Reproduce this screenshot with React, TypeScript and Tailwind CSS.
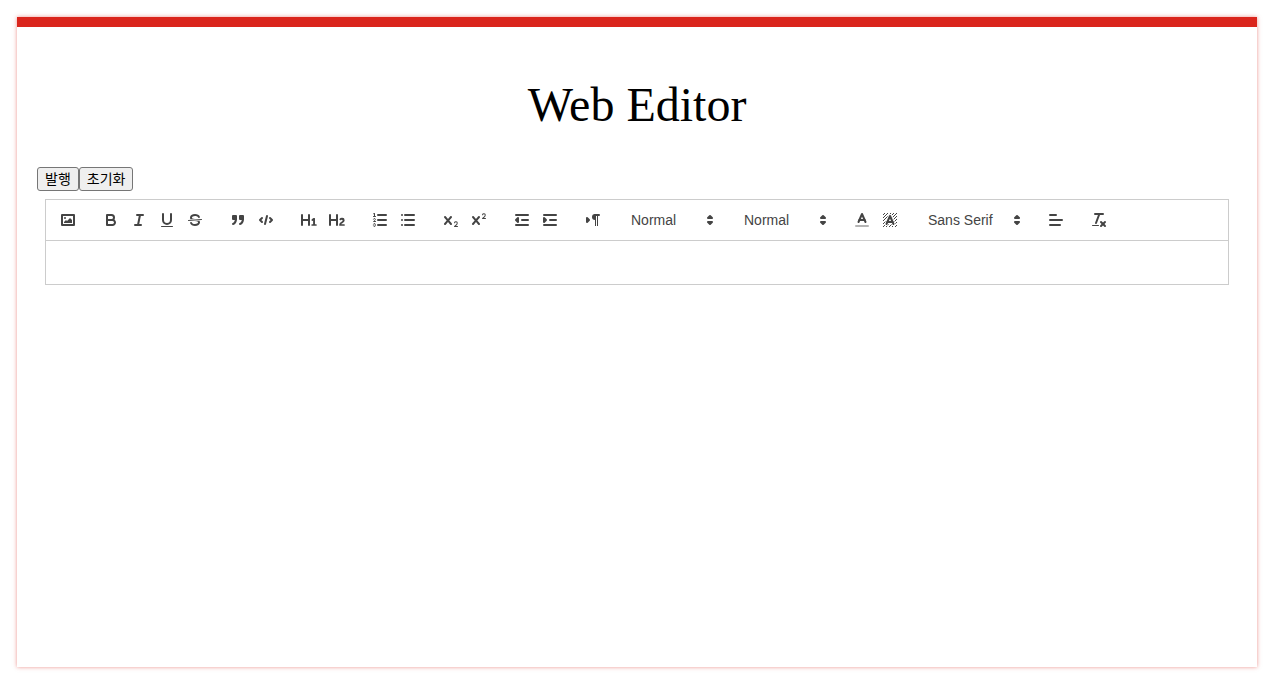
import type { ReactNode } from "react";

const X_GLYPH =
  "M9.65,5.241a1,1,0,0,0-1.409.108L6,7.964,3.759,5.349A1,1,0,0,0,2.192,6.59178Q2.21541,6.6213,2.241,6.649L4.684,9.5,2.241,12.35A1,1,0,0,0,3.71,13.70722q0.02557-.02768.049-0.05722L6,11.036,8.241,13.65a1,1,0,1,0,1.567-1.24277Q9.78459,12.3777,9.759,12.35L7.316,9.5,9.759,6.651A1,1,0,0,0,9.65,5.241Z";

const HATCH: [number, number][] = [
  [4, 4], [2, 6], [3, 5], [4, 7], [2, 12], [2, 9], [2, 15], [3, 8], [12, 2], [11, 3],
  [2, 3], [6, 2], [3, 2], [5, 3], [9, 2], [15, 14], [13, 7], [15, 5], [14, 6], [15, 8],
  [14, 9], [14, 3], [15, 2], [12, 5], [13, 4], [9, 14], [8, 15], [5, 15], [11, 15], [14, 15], [15, 11],
];

const solid = { fill: "#444", stroke: "none" };

function Icon({ children }: { children: ReactNode }) {
  return (
    <svg
      viewBox="0 0 18 18"
      className="size-[18px] shrink-0"
      fill="none"
      stroke="#444"
      strokeWidth="2"
      strokeLinecap="round"
      strokeLinejoin="round"
      aria-hidden="true"
    >
      {children}
    </svg>
  );
}

function Tool({ label, children }: { label: string; children: ReactNode }) {
  return (
    <button type="button" aria-label={label} className="flex h-6 w-7 items-center justify-center">
      <Icon>{children}</Icon>
    </button>
  );
}

function Group({ children }: { children: ReactNode }) {
  return <div className="flex">{children}</div>;
}

function Picker({ label, options, wide }: { label: string; options: string[]; wide?: boolean }) {
  return (
    <div className={`grid h-6 items-center ${wide ? "w-[108px]" : "w-[98px]"}`}>
      <select
        aria-label={label}
        className="col-start-1 row-start-1 h-6 w-full appearance-none bg-transparent pl-[9px] text-[14px] font-medium text-[#444]"
      >
        {options.map((o) => (
          <option key={o}>{o}</option>
        ))}
      </select>
      <span className="pointer-events-none col-start-1 row-start-1 flex justify-end pr-px">
        <Icon>
          <polygon fill="#444" points="7 11 9 13 11 11 7 11" />
          <polygon fill="#444" points="7 7 9 5 11 7 7 7" />
        </Icon>
      </span>
    </div>
  );
}

function Toolbar() {
  return (
    <div role="toolbar" className="flex flex-wrap gap-x-[15px] border border-[#ccc] p-2">
      <Group>
        <Tool label="Image">
          <rect height="10" width="12" x="3" y="4" />
          <circle {...solid} cx="6" cy="7" r="1" />
          <polyline {...solid} points="5 12 5 11 7 9 8 10 11 7 13 9 13 12 5 12" />
        </Tool>
      </Group>
      <Group>
        <Tool label="Bold">
          <path d="M5,4H9.5A2.5,2.5,0,0,1,12,6.5v0A2.5,2.5,0,0,1,9.5,9H5A0,0,0,0,1,5,9V4A0,0,0,0,1,5,4Z" />
          <path d="M5,9h5.5A2.5,2.5,0,0,1,13,11.5v0A2.5,2.5,0,0,1,10.5,14H5a0,0,0,0,1,0,0V9A0,0,0,0,1,5,9Z" />
        </Tool>
        <Tool label="Italic">
          <line x1="7" x2="13" y1="4" y2="4" />
          <line x1="5" x2="11" y1="14" y2="14" />
          <line x1="8" x2="10" y1="14" y2="4" />
        </Tool>
        <Tool label="Underline">
          <path d="M5,3V9a4.012,4.012,0,0,0,4,4H9a4.012,4.012,0,0,0,4-4V3" />
          <rect {...solid} height="1" rx="0.5" ry="0.5" width="12" x="3" y="15" />
        </Tool>
        <Tool label="Strike">
          <line strokeWidth="1" x1="15.5" x2="2.5" y1="8.5" y2="9.5" />
          <path {...solid} d="M9.007,8C6.542,7.791,6,7.519,6,6.5,6,5.792,7.283,5,9,5c1.571,0,2.765.679,2.969,1.309a1,1,0,0,0,1.9-.617C13.356,4.106,11.354,3,9,3,6.2,3,4,4.538,4,6.5a3.2,3.2,0,0,0,.5,1.843Z" />
          <path {...solid} d="M8.984,10C11.457,10.208,12,10.479,12,11.5c0,0.708-1.283,1.5-3,1.5-1.571,0-2.765-.679-2.969-1.309a1,1,0,1,0-1.9.617C4.644,13.894,6.646,15,9,15c2.8,0,5-1.538,5-3.5a3.2,3.2,0,0,0-.5-1.843Z" />
        </Tool>
      </Group>
      <Group>
        <Tool label="Blockquote">
          <rect fill="#444" height="3" width="3" x="4" y="5" />
          <rect fill="#444" height="3" width="3" x="11" y="5" />
          <path fill="#444" d="M7,8c0,4.031-3,5-3,5" />
          <path fill="#444" d="M14,8c0,4.031-3,5-3,5" />
        </Tool>
        <Tool label="Code block">
          <polyline points="5 7 3 9 5 11" />
          <polyline points="13 7 15 9 13 11" />
          <line x1="10" x2="8" y1="5" y2="13" />
        </Tool>
      </Group>
      <Group>
        <Tool label="Heading 1">
          <path {...solid} d="M10,4V14a1,1,0,0,1-2,0V10H3v4a1,1,0,0,1-2,0V4A1,1,0,0,1,3,4V8H8V4a1,1,0,0,1,2,0Zm6.06787,9.209H14.98975V7.59863a.54085.54085,0,0,0-.605-.60547h-.62744a1.01119,1.01119,0,0,0-.748.29688L11.645,8.56641a.5435.5435,0,0,0-.022.8584l.28613.30762a.53861.53861,0,0,0,.84717.0332l.09912-.08789a1.2137,1.2137,0,0,0,.2417-.35254h.02246s-.01123.30859-.01123.60547V13.209H12.041a.54085.54085,0,0,0-.605.60547v.43945a.54085.54085,0,0,0,.605.60547h4.02686a.54085.54085,0,0,0,.605-.60547v-.43945A.54085.54085,0,0,0,16.06787,13.209Z" />
        </Tool>
        <Tool label="Heading 2">
          <path {...solid} d="M16.73975,13.81445v.43945a.54085.54085,0,0,1-.605.60547H11.855a.58392.58392,0,0,1-.64893-.60547V14.0127c0-2.90527,3.39941-3.42187,3.39941-4.55469a.77675.77675,0,0,0-.84717-.78125,1.17684,1.17684,0,0,0-.83594.38477c-.2749.26367-.561.374-.85791.13184l-.4292-.34082c-.30811-.24219-.38525-.51758-.1543-.81445a2.97155,2.97155,0,0,1,2.45361-1.17676,2.45393,2.45393,0,0,1,2.68408,2.40918c0,2.45312-3.1792,2.92676-3.27832,3.93848h2.79443A.54085.54085,0,0,1,16.73975,13.81445ZM9,3A.99974.99974,0,0,0,8,4V8H3V4A1,1,0,0,0,1,4V14a1,1,0,0,0,2,0V10H8v4a1,1,0,0,0,2,0V4A.99974.99974,0,0,0,9,3Z" />
        </Tool>
      </Group>
      <Group>
        <Tool label="Ordered list">
          <line x1="7" x2="15" y1="4" y2="4" />
          <line x1="7" x2="15" y1="9" y2="9" />
          <line x1="7" x2="15" y1="14" y2="14" />
          <line strokeWidth="1" x1="2.5" x2="4.5" y1="5.5" y2="5.5" />
          <path {...solid} d="M3.5,6A0.5,0.5,0,0,1,3,5.5V3.085l-0.276.138A0.5,0.5,0,0,1,2.053,3c-0.124-.247-0.023-0.324.224-0.447l1-.5A0.5,0.5,0,0,1,4,2.5v3A0.5,0.5,0,0,1,3.5,6Z" />
          <path strokeWidth="1" d="M4.5,10.5h-2c0-.234,1.85-1.076,1.85-2.234A0.959,0.959,0,0,0,2.5,8.156" />
          <path strokeWidth="1" d="M2.5,14.846a0.959,0.959,0,0,0,1.85-.109A0.7,0.7,0,0,0,3.75,14a0.688,0.688,0,0,0,.6-0.736,0.959,0.959,0,0,0-1.85-.109" />
        </Tool>
        <Tool label="Bullet list">
          <line x1="6" x2="15" y1="4" y2="4" />
          <line x1="6" x2="15" y1="9" y2="9" />
          <line x1="6" x2="15" y1="14" y2="14" />
          <line x1="3" x2="3" y1="4" y2="4" />
          <line x1="3" x2="3" y1="9" y2="9" />
          <line x1="3" x2="3" y1="14" y2="14" />
        </Tool>
      </Group>
      <Group>
        <Tool label="Subscript">
          <path {...solid} d="M15.5,15H13.861a3.858,3.858,0,0,0,1.914-2.975,1.8,1.8,0,0,0-1.6-1.751A1.921,1.921,0,0,0,12.021,11.7a0.50013,0.50013,0,1,0,.957.291h0a0.914,0.914,0,0,1,1.053-.725,0.81,0.81,0,0,1,.744.762c0,1.076-1.16971,1.86982-1.93971,2.43082A1.45639,1.45639,0,0,0,12,15.5a0.5,0.5,0,0,0,.5.5h3A0.5,0.5,0,0,0,15.5,15Z" />
          <path {...solid} d={X_GLYPH} />
        </Tool>
        <Tool label="Superscript">
          <path {...solid} d="M15.5,7H13.861a4.015,4.015,0,0,0,1.914-2.975,1.8,1.8,0,0,0-1.6-1.751A1.922,1.922,0,0,0,12.021,3.7a0.5,0.5,0,1,0,.957.291,0.917,0.917,0,0,1,1.053-.725,0.81,0.81,0,0,1,.744.762c0,1.077-1.164,1.925-1.934,2.486A1.423,1.423,0,0,0,12,7.5a0.5,0.5,0,0,0,.5.5h3A0.5,0.5,0,0,0,15.5,7Z" />
          <path {...solid} d={X_GLYPH} />
        </Tool>
      </Group>
      <Group>
        <Tool label="Outdent">
          <line x1="3" x2="15" y1="14" y2="14" />
          <line x1="3" x2="15" y1="4" y2="4" />
          <line x1="9" x2="15" y1="9" y2="9" />
          <polyline points="5 7 5 11 3 9 5 7" />
        </Tool>
        <Tool label="Indent">
          <line x1="3" x2="15" y1="14" y2="14" />
          <line x1="3" x2="15" y1="4" y2="4" />
          <line x1="9" x2="15" y1="9" y2="9" />
          <polyline fill="#444" points="3 7 3 11 5 9 3 7" />
        </Tool>
      </Group>
      <Group>
        <Tool label="Text direction">
          <polygon fill="#444" points="3 11 5 9 3 7 3 11" />
          <line x1="15" x2="11" y1="4" y2="4" />
          <path {...solid} d="M11,3a3,3,0,0,0,0,6h1V3H11Z" />
          <rect {...solid} height="11" width="1" x="11" y="4" />
          <rect {...solid} height="11" width="1" x="13" y="4" />
        </Tool>
      </Group>
      <Picker label="Size" options={["Normal", "Small", "Large", "Huge"]} />
      <Picker label="Heading" options={["Normal", "Heading 1", "Heading 2", "Heading 3"]} />
      <Group>
        <Tool label="Text color">
          <line opacity="0.4" x1="3" x2="15" y1="15" y2="15" />
          <polyline points="5.5 11 9 3 12.5 11" />
          <line x1="11.63" x2="6.38" y1="9" y2="9" />
        </Tool>
        <Tool label="Background color">
          <g {...solid}>
            {HATCH.map(([x, y]) => (
              <rect key={`${x}-${y}`} height="1" width="1" x={x} y={y} />
            ))}
            <polygon points="6 6.868 6 6 5 6 5 7 5.942 7 6 6.868" />
            <polygon points="6.817 5 6 5 6 6 6.38 6 6.817 5" />
            <polygon points="4 11.439 4 11 3 11 3 12 3.755 12 4 11.439" />
            <polygon points="4.63 10 4 10 4 11 4.192 11 4.63 10" />
            <path d="M10.832,4.2L11,4.582V4H10.708A1.948,1.948,0,0,1,10.832,4.2Z" />
            <path d="M7,4.582L7.168,4.2A1.929,1.929,0,0,1,7.292,4H7V4.582Z" />
            <path d="M8,13H7.683l-0.351.8a1.933,1.933,0,0,1-.124.2H8V13Z" />
            <path d="M9,3H8V3.282A1.985,1.985,0,0,1,9,3Z" />
            <polygon points="13.447 10.174 13.469 10.225 13.472 10.232 13.808 11 14 11 14 10 13.37 10 13.447 10.174" />
            <path d="M3.775,14H3v1H4V14.314A1.97,1.97,0,0,1,3.775,14Z" />
            <polygon points="12 6.868 12 6 11.62 6 12 6.868" />
            <polygon points="12.933 9 13 9 13 8 12.495 8 12.933 9" />
            <path d="M6,14.926V15H7V14.316A1.993,1.993,0,0,1,6,14.926Z" />
            <path d="M10.668,13.8L10.317,13H10v1h0.792A1.947,1.947,0,0,1,10.668,13.8Z" />
            <path d="M14.332,12.2a1.99,1.99,0,0,1,.166.8H15V12H14.245Z" />
          </g>
          <polyline points="5.5 13 9 5 12.5 13" />
          <line x1="11.63" x2="6.38" y1="11" y2="11" />
        </Tool>
      </Group>
      <Picker wide label="Font" options={["Sans Serif", "Serif", "Monospace"]} />
      <Group>
        <Tool label="Align">
          <line x1="3" x2="15" y1="9" y2="9" />
          <line x1="3" x2="13" y1="14" y2="14" />
          <line x1="3" x2="9" y1="4" y2="4" />
        </Tool>
      </Group>
      <Group>
        <Tool label="Clear formatting">
          <line x1="5" x2="13" y1="3" y2="3" />
          <line x1="6" x2="9.35" y1="12" y2="3" />
          <line x1="11" x2="15" y1="11" y2="15" />
          <line x1="15" x2="11" y1="11" y2="15" />
          <rect {...solid} height="1" rx="0.5" ry="0.5" width="7" x="2" y="14" />
        </Tool>
      </Group>
    </div>
  );
}

function PlainButton({ children }: { children: ReactNode }) {
  return (
    <button
      type="button"
      className="h-6 rounded-[3px] border border-[#767676] bg-[#efefef] px-[7px] text-[14px] leading-5 text-black"
    >
      {children}
    </button>
  );
}

export default function App() {
  return (
    <div className="flex min-h-screen flex-col bg-white pt-[17px] pr-4 pb-[18px] pl-[17px] font-['Liberation_Sans','Noto_Sans_CJK_KR',sans-serif]">
      <main className="flex-1 border-t-10 border-[#da251c] bg-white px-5 shadow-[0_0_4px_rgba(218,37,28,0.5)]">
        <h1 className="pt-[50px] pb-[34px] text-center font-['Liberation_Serif',serif] text-[48px] leading-[56px] text-black">
          Web Editor
        </h1>
        <div className="flex">
          <PlainButton>발행</PlainButton>
          <PlainButton>초기화</PlainButton>
        </div>
        <div className="p-2">
          <Toolbar />
          <div
            role="textbox"
            aria-label="Content"
            aria-multiline="true"
            contentEditable
            suppressContentEditableWarning
            className="min-h-11 border border-t-0 border-[#ccc] px-[15px] py-3 text-[13px] leading-[19px] outline-none"
          />
        </div>
      </main>
    </div>
  );
}
